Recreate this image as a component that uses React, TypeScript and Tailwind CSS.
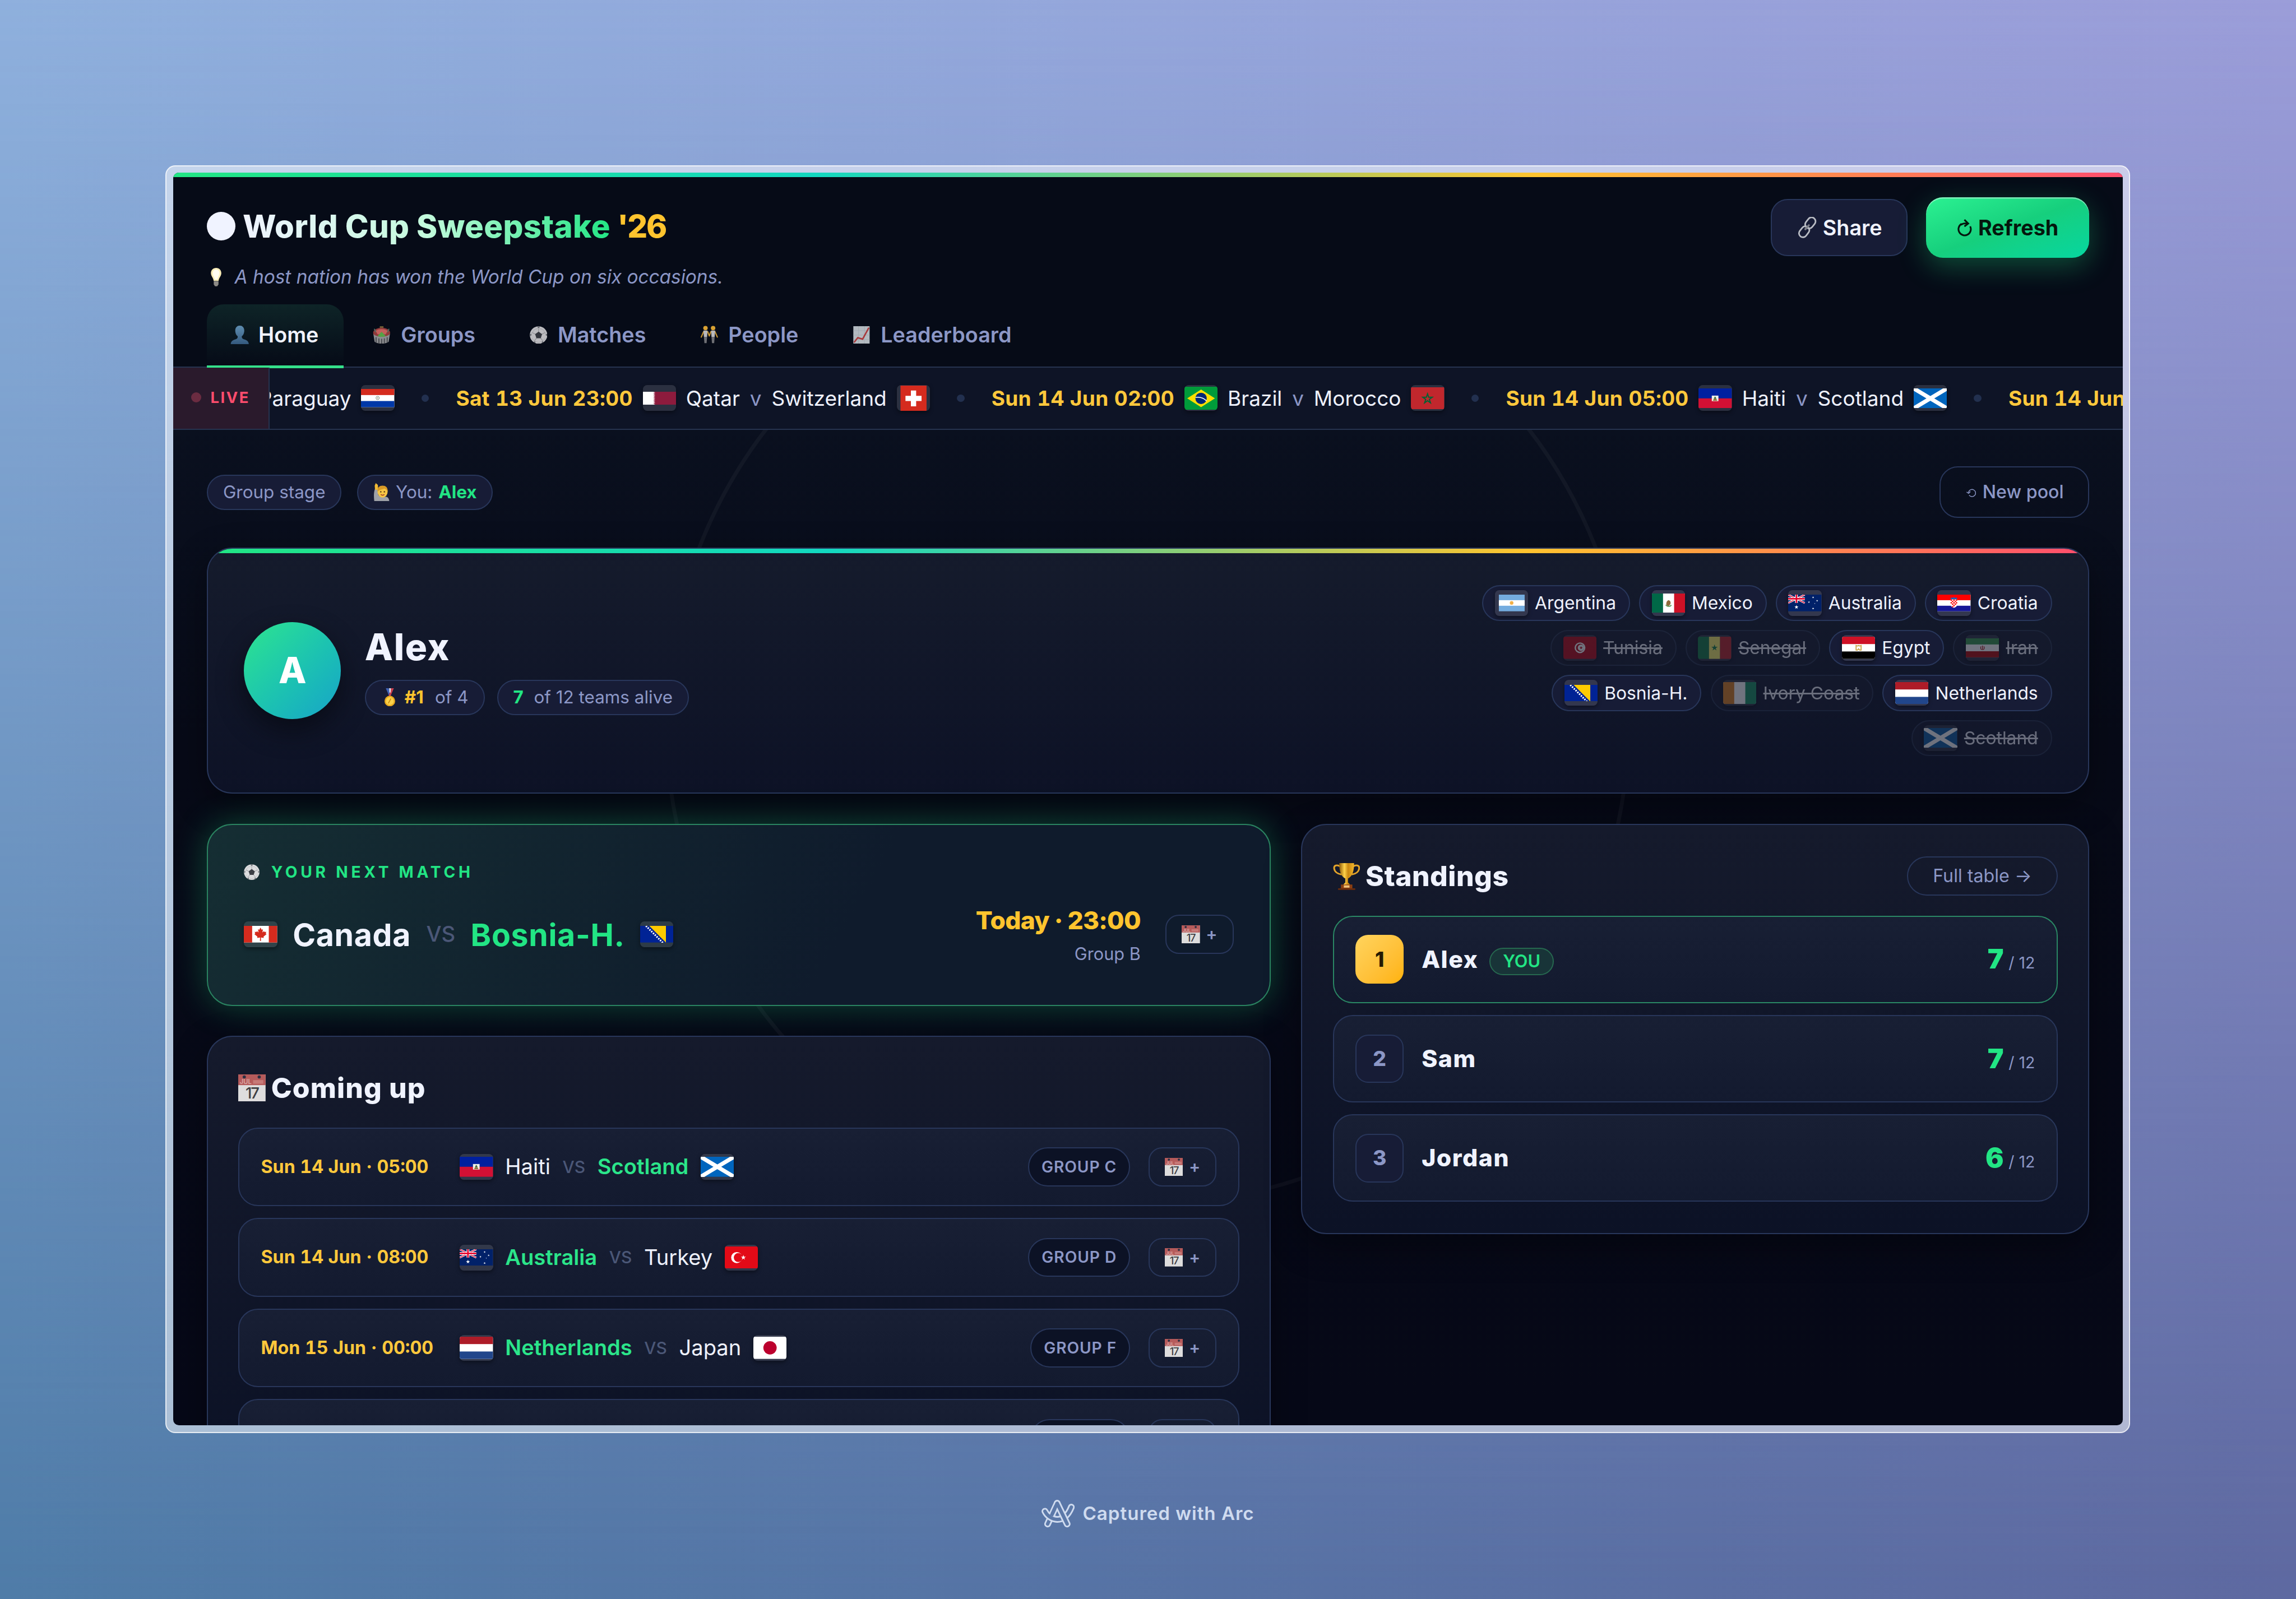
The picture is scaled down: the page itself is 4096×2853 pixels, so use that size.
import type { ReactNode } from 'react'
import clsx from 'clsx'

type Code =
  | 'par' | 'qat' | 'sui' | 'bra' | 'mar' | 'hai' | 'sco' | 'arg' | 'mex' | 'aus' | 'cro' | 'tun'
  | 'sen' | 'egy' | 'irn' | 'bih' | 'civ' | 'ned' | 'can' | 'tur' | 'jpn'

const STAR = 'M0-1 .225-.309.951-.309.363.118.588.809 0 .382-.588.809-.363.118-.951-.309-.225-.309Z'

function Star({ x, y, r, fill = '#fff' }: { x: number; y: number; r: number; fill?: string }) {
  return <path d={STAR} fill={fill} transform={`translate(${x} ${y}) scale(${r})`} />
}

// every flag is 24 units wide; h is what its own proportions make of that
const FLAGS: Record<Code, { h: number; art: ReactNode }> = {
  par: {
    h: 13.1,
    art: (
      <>
        <rect width="24" height="13.1" fill="#fff" />
        <rect width="24" height="4.4" fill="#d52b1e" />
        <rect y="8.7" width="24" height="4.4" fill="#0038a8" />
        <circle cx="12" cy="6.5" r="1.2" fill="none" stroke="#7b8a80" strokeWidth=".4" />
        <circle cx="12" cy="6.5" r=".4" fill="#8a8a60" />
      </>
    ),
  },
  qat: {
    h: 9.4,
    art: (
      <>
        <rect width="24" height="9.4" fill="#8d1b3d" />
        <path
          d="M0 0H7.4L8.9.52 7.4 1.04 8.9 1.57 7.4 2.09 8.9 2.61 7.4 3.13 8.9 3.66 7.4 4.18 8.9 4.7 7.4 5.22 8.9 5.74 7.4 6.27 8.9 6.79 7.4 7.31 8.9 7.83 7.4 8.36 8.9 8.88 7.4 9.4H0Z"
          fill="#fff"
        />
      </>
    ),
  },
  sui: {
    h: 18.5,
    art: (
      <>
        <rect x="2.6" width="18.8" height="18.5" fill="#d52b1e" />
        <path d="M10.1 3.5h3.8v3.9h3.9v3.7h-3.9V15h-3.8v-3.9H6.2V7.4h3.9Z" fill="#fff" />
      </>
    ),
  },
  bra: {
    h: 16.8,
    art: (
      <>
        <rect width="24" height="16.8" fill="#009b3a" />
        <path d="M12 2 22 8.4 12 14.8 2 8.4Z" fill="#fedf00" />
        <circle cx="12" cy="8.4" r="4.1" fill="#002776" />
        <path d="M8 7.7c3-.5 6 .4 8 2.6" fill="none" stroke="#fff" strokeWidth=".6" />
      </>
    ),
  },
  mar: {
    h: 16,
    art: (
      <>
        <rect width="24" height="16" fill="#c1272d" />
        <path
          d={STAR}
          fill="none"
          stroke="#006233"
          strokeWidth=".22"
          transform="translate(12 8.3) scale(3.6)"
        />
      </>
    ),
  },
  hai: {
    h: 14.4,
    art: (
      <>
        <rect width="24" height="7.2" fill="#00209f" />
        <rect y="7.2" width="24" height="7.2" fill="#d21034" />
        <rect x="9.6" y="5.2" width="4.8" height="4" fill="#f1efe6" />
        <path d="M12 5.8 13 7.4h-2Z" fill="#30683a" />
        <path d="M10.4 8.9h3.2L12.8 7.4h-1.6Z" fill="#8a7440" />
      </>
    ),
  },
  sco: {
    h: 14.4,
    art: (
      <>
        <rect width="24" height="14.4" fill="#0065bd" />
        <path d="M0 0 24 14.4M24 0 0 14.4" stroke="#fff" strokeWidth="2.9" />
      </>
    ),
  },
  arg: {
    h: 12,
    art: (
      <>
        <rect x="2.8" width="18.6" height="12" fill="#74acdf" />
        <rect x="2.8" y="4" width="18.6" height="4" fill="#fff" />
        <circle cx="12" cy="6" r="1.3" fill="#f0b04a" />
      </>
    ),
  },
  mex: {
    h: 14.1,
    art: (
      <>
        <rect width="24" height="14.1" fill="#fff" />
        <rect width="8" height="14.1" fill="#006847" />
        <rect x="16" width="8" height="14.1" fill="#ce1126" />
        <path d="M10.4 8.2c-.2-1.6.4-3 1.6-3.4.9.2 1.6 1 1.5 2.2-.2 1-1 1.6-1.7 2.4" fill="#8f6a3c" />
        <path d="M10 8.2c.6 1.4 3.2 1.5 4 .1" fill="none" stroke="#5f9a58" strokeWidth=".7" />
      </>
    ),
  },
  aus: {
    h: 12,
    art: (
      <>
        <rect width="24" height="12" fill="#012169" />
        <path d="M0 0 12 6M12 0 0 6" stroke="#fff" strokeWidth="1.3" />
        <path d="M0 0 12 6M12 0 0 6" stroke="#e4002b" strokeWidth=".5" />
        <path d="M6 0V6M0 3H12" stroke="#fff" strokeWidth="2" />
        <path d="M6 0V6M0 3H12" stroke="#e4002b" strokeWidth="1.1" />
        <Star x={6} y={9} r={1.5} />
        <Star x={18} y={2} r={0.75} />
        <Star x={18} y={10} r={0.8} />
        <Star x={15} y={5.4} r={0.8} />
        <Star x={20.9} y={4.4} r={0.75} />
        <Star x={19.2} y={6.4} r={0.4} />
      </>
    ),
  },
  cro: {
    h: 12,
    art: (
      <>
        <rect width="24" height="12" fill="#fff" />
        <rect width="24" height="4" fill="#ff0000" />
        <rect y="8" width="24" height="4" fill="#171796" />
        <path d="M9.6 3.4h4.8v3.4c0 1.6-1.1 2.4-2.4 2.7-1.3-.3-2.4-1.1-2.4-2.7Z" fill="#fff" />
        <path
          d="M9.6 3.4h1v1h-1ZM11.6 3.4h1v1h-1ZM13.5 3.4h.9v1h-.9ZM10.6 4.4h1v1h-1ZM12.6 4.4h1v1h-1ZM9.6 5.4h1v1h-1ZM11.6 5.4h1v1h-1ZM13.5 5.4h.9v1h-.9ZM10.6 6.4h1v1h-1ZM12.6 6.4h1v1h-1ZM11.6 7.4h1v1h-1ZM10.6 8.3h1v.8h-1Z"
          fill="#f00"
        />
        <path d="M9.6 3.3 9.9 1.9l1 .5 1.1-.7 1.1.7 1-.5.3 1.4Z" fill="#1a62b8" />
      </>
    ),
  },
  tun: {
    h: 16,
    art: (
      <>
        <rect width="24" height="16" fill="#e70013" />
        <circle cx="12" cy="8" r="3.9" fill="#fff" />
        <circle cx="12" cy="8" r="2.9" fill="#e70013" />
        <circle cx="12.7" cy="8" r="2.3" fill="#fff" />
        <Star x={12.8} y={8} r={1.3} fill="#e70013" />
      </>
    ),
  },
  sen: {
    h: 16,
    art: (
      <>
        <rect width="8" height="16" fill="#00853f" />
        <rect x="8" width="8" height="16" fill="#fdef42" />
        <rect x="16" width="8" height="16" fill="#e31b23" />
        <Star x={12} y={8} r={2.4} fill="#00853f" />
      </>
    ),
  },
  egy: {
    h: 16,
    art: (
      <>
        <rect width="24" height="16" fill="#fff" />
        <rect width="24" height="5.33" fill="#ce1126" />
        <rect y="10.67" width="24" height="5.33" fill="#000" />
        <path d="M10.2 6.4c1 .6 1.4.2 1.8 0 .4.2.8.6 1.8 0v3.3h-1l-.8-1-.8 1h-1Z" fill="none" stroke="#c8a03c" strokeWidth=".7" />
      </>
    ),
  },
  irn: {
    h: 13.7,
    art: (
      <>
        <rect width="24" height="13.7" fill="#fff" />
        <rect width="24" height="4.4" fill="#239f40" />
        <rect y="9.3" width="24" height="4.4" fill="#da0000" />
        <path d="M12 5.3v3M11 5.8c-.6 1-.3 2 .6 2.4M13 5.8c.6 1 .3 2-.6 2.4" fill="none" stroke="#da0000" strokeWidth=".5" />
      </>
    ),
  },
  bih: {
    h: 12,
    art: (
      <>
        <rect width="24" height="12" fill="#002395" />
        <path d="M6.6 0H18.6V12Z" fill="#fecb00" />
        <path d="M4.2 0 16.6 12.4" stroke="#fff" strokeWidth="1.3" strokeDasharray="1 .8" />
      </>
    ),
  },
  civ: {
    h: 16,
    art: (
      <>
        <rect width="24" height="16" fill="#fff" />
        <rect width="8" height="16" fill="#f77f00" />
        <rect x="16" width="8" height="16" fill="#009e60" />
      </>
    ),
  },
  ned: {
    h: 16,
    art: (
      <>
        <rect width="24" height="16" fill="#fff" />
        <rect width="24" height="5.33" fill="#ae1c28" />
        <rect y="10.67" width="24" height="5.33" fill="#21468b" />
      </>
    ),
  },
  can: {
    h: 12,
    art: (
      <>
        <rect width="24" height="12" fill="#fff" />
        <rect width="6" height="12" fill="#d52b1e" />
        <rect x="18" width="6" height="12" fill="#d52b1e" />
        <path
          d="m12 1.2.9 1.6.9-.4-.4 2.4 1.2-1.1.3.7 1.3-.2-.4 1.3.6.5-2.2 1.8.2.9-2.1-.3.1 2.4h-.8l.1-2.4-2.1.3.2-.9-2.2-1.8.6-.5-.4-1.3 1.3.2.3-.7 1.2 1.1-.4-2.4.9.4Z"
          fill="#d52b1e"
        />
      </>
    ),
  },
  tur: {
    h: 16,
    art: (
      <>
        <rect width="24" height="16" fill="#e30a17" />
        <circle cx="8.6" cy="8" r="4" fill="#fff" />
        <circle cx="9.7" cy="8" r="3.2" fill="#e30a17" />
        <Star x={13.4} y={8} r={1.9} />
      </>
    ),
  },
  jpn: {
    h: 16,
    art: (
      <>
        <rect width="24" height="16" fill="#fff" />
        <circle cx="12" cy="8" r="4.8" fill="#bc002d" />
      </>
    ),
  },
}

function Flag({ code }: { code: Code }) {
  const { h, art } = FLAGS[code]
  return (
    <span className="flex h-[18.3px] w-[23.6px] shrink-0 items-center justify-center overflow-hidden rounded-[3px] bg-white/12 shadow-[0_1px_3px_rgba(0,0,0,0.4)]">
      <svg viewBox={`0 0 24 ${h}`} className="max-h-full w-full">{art}</svg>
    </span>
  )
}

function Ball({ className }: { className: string }) {
  return (
    <svg viewBox="0 0 24 24" className={className}>
      <circle cx="12" cy="12" r="11.8" fill="#dcdcde" />
      <path d="M12 7.5V3M16.500 10.800l4.300-2.300M14.800 16l3 4M9.200 16l-3 4M7.500 10.800 3.200 8.500" stroke="#a5a5aa" strokeWidth=".9" />
      <path d="M3.200 8.500 1.200 13M3.200 8.500 7 4.200 12 3l5 1.200 3.800 4.300 2 4.500M6.200 20 2.800 16M6.200 20l5.800 2 5.800-2 3.400-4" fill="none" stroke="#bcbcc0" strokeWidth=".7" />
      <path d="m12 7.300 4.700 3.500-1.800 5.400H9.100l-1.800-5.400Z" fill="#3c3e45" />
      <path d="M9.800.5h4.400L12 2.700ZM.4 10 .9 13.500l1.700-2ZM23.600 10l-.5 3.500-1.700-2ZM5 21.500l2.800 1.400-.6-2.600ZM19 21.500l-2.800 1.400.6-2.600Z" fill="#66686e" />
    </svg>
  )
}

function Calendar({ className }: { className: string }) {
  return (
    <svg viewBox="0 0 24 24" className={className}>
      <rect width="24" height="24" fill="#dedddd" />
      <rect width="24" height="9.400" fill="#b65b5b" />
      <rect x="13" y="5" width="9" height="3.200" fill="#c77a78" />
      <circle cx="5.300" cy="2.200" r="1.400" fill="#2b2f42" />
      <circle cx="18.400" cy="2.200" r="1.400" fill="#2b2f42" />
      <text x="1.400" y="8.600" fontSize="5.500" fill="#dba9a8" className="font-['Inter',sans-serif] font-semibold">JUL</text>
      <text x="12" y="21.300" fontSize="13.500" textAnchor="middle" letterSpacing="-1" fill="#3e3e42" className="font-['Inter',sans-serif] font-medium">17</text>
    </svg>
  )
}

function Bulb() {
  return (
    <svg viewBox="0 0 14 24" className="h-[13px] w-[7.600px]">
      <path d="M7 0c4 0 6.800 3 6.800 6.800C13.800 11 10.500 13 10.200 17H3.800C3.500 13 .2 11 .2 6.800.2 3 3 0 7 0Z" fill="#fbeeb8" />
      <path d="M7 2c2.600 0 4.400 2 4.400 4.800 0 3.200-2.200 5-2.600 8.200H5.200C4.800 11.800 2.600 10 2.600 6.800 2.600 4 4.400 2 7 2Z" fill="#fffdf0" />
      <path d="M3.900 17.500h6.200v4L8.500 24h-3l-1.600-2.500Z" fill="#8c8a86" />
    </svg>
  )
}

function Bust() {
  return (
    <svg viewBox="0 0 24 25" className="h-[13.300px] w-[13.300px]">
      <defs>
        <linearGradient id="bust" x1="0" y1="0" x2="0" y2="1">
          <stop offset="0" stopColor="#5e8db0" />
          <stop offset="1" stopColor="#34597d" />
        </linearGradient>
      </defs>
      <path d="M12 0c3.700 0 6 2.600 6 6.500 0 3.400-1.400 6.300-3.200 7.600-.3 2.400.6 3.500 3 4.200C21.600 19.400 24 21 24 25H0c0-4 2.400-5.600 6.200-6.700 2.400-.7 3.300-1.800 3-4.200C7.400 12.800 6 9.900 6 6.500 6 2.600 8.300 0 12 0Z" fill="url(#bust)" />
    </svg>
  )
}

function Stadium() {
  return (
    <svg viewBox="0 0 24 24" className="h-[12.600px] w-[12.600px]">
      <path d="M9.500 0h5v3h-5Z" fill="#6c5b34" />
      <ellipse cx="12" cy="9" rx="11.500" ry="7" fill="#8f3a3a" />
      <path d="M.8 10.500 2.500 21c5 3.600 14 3.600 19 0l1.700-10.500c-4 5-18.400 5-22.400 0Z" fill="#8b8c8f" />
      <path d="M4.500 15v7M8.300 16.500v7M12 17v7M15.700 16.500v7M19.500 15v7" stroke="#4b4d52" strokeWidth="1.500" />
      <path d="M4 6.500c3-3.400 13-3.400 16 0L17.500 11h-11Z" fill="#c4605c" />
      <path d="M12 7.500 17.500 13c-3 1.800-8 1.800-11 0Z" fill="#54a246" />
      <path d="M2 3.500 4 8M22 3.500 20 8" stroke="#4e7268" strokeWidth="1.300" />
    </svg>
  )
}

function Pair() {
  return (
    <svg viewBox="0 0 24 24" className="h-[13px] w-[13px]">
      <path d="M4.500 8 1.500 15M10 8l2 5.500M14 8l-2 5.500M19.500 8l3 7" stroke="#c8952f" strokeWidth="1.600" strokeLinecap="round" />
      <path d="M4.300 6.500h5.400l-.6 8.500H5ZM14.300 6.500h5.400L19 15h-4.100Z" fill="#b9b9bd" />
      <path d="M5 15h4.100L8.500 23H5.600ZM14.900 15H19l-.6 8h-2.900Z" fill="#6e6f74" />
      <circle cx="7" cy="3.200" r="2.900" fill="#d9a233" />
      <circle cx="17" cy="3.200" r="2.900" fill="#d9a233" />
    </svg>
  )
}

function Chart() {
  return (
    <svg viewBox="0 0 24 24" className="h-[12.600px] w-[12.600px]">
      <rect x="1" width="22" height="24" fill="#b3bac0" />
      <path d="M1 6h22M1 12h22M1 18h22M8 0v24M16 0v24" stroke="#a2aab1" strokeWidth=".7" />
      <path d="m2 22 5-6.500 6.500 2L22 2" fill="none" stroke="#a9383a" strokeWidth="2" />
    </svg>
  )
}

function Link() {
  return (
    <svg viewBox="0 0 24 24" className="h-[15px] w-[15px]" fill="none" stroke="#b9bcc4">
      <rect x="11" y="0" width="9" height="13.500" rx="4.500" strokeWidth="1.800" transform="rotate(38 15.500 7)" />
      <rect x="4" y="10" width="9" height="13.500" rx="4.500" strokeWidth="1.800" transform="rotate(38 8.500 17)" />
      <path d="m10 14 4-4.500" stroke="#7c7f88" strokeWidth="2.200" strokeLinecap="round" />
    </svg>
  )
}

function RaisedHand() {
  return (
    <svg viewBox="0 0 22 25" className="h-[12.800px] w-[11.600px]">
      <path d="M1 25C0 17 .5 12 2 8l4 1.500C5.500 14 6 17 9 18.500l9 .5c2.500.8 3.500 3 3.800 6Z" fill="#9fa2a8" />
      <path d="M2 9 1.600 3.500 3 0l3 2.600.3 7Z" fill="#f2ba35" />
      <ellipse cx="12.500" cy="12" rx="7" ry="8" fill="#f6c544" />
      <path d="M5.500 12C5 6 8 3.500 12.500 3.500S20 6 19.500 12c-1-3-3-4-4.500-4.500-3 1.500-7 1-9.500 4.500Z" fill="#d99a26" />
      <circle cx="10" cy="12" r="1" fill="#5a3c18" />
      <circle cx="15" cy="12" r="1" fill="#5a3c18" />
      <path d="M10 15.500c1.500 1.500 3.500 1.500 5 0" fill="none" stroke="#a4402c" strokeWidth="1.200" />
    </svg>
  )
}

function Medal() {
  return (
    <svg viewBox="0 0 16 25" className="h-[13px] w-[8.300px]">
      <path d="M2.500 0h4l3 10.500H7Z" fill="#3f62b5" />
      <path d="M13.500 0h-4l-3 10.500H9Z" fill="#c8414f" />
      <path d="M7 0h2.500L9 6 7.500 6Z" fill="#e8e8f0" />
      <circle cx="8" cy="17.500" r="7.300" fill="#e9a91e" />
      <circle cx="8" cy="17.500" r="5.400" fill="#fbd24a" />
      <path d="M6 20.500 9.500 14" stroke="#c98a12" strokeWidth="1.300" />
    </svg>
  )
}

function Trophy() {
  return (
    <svg viewBox="0 0 24 24" className="h-[19.400px] w-[19.400px]">
      <defs>
        <linearGradient id="cup" x1="0" x2="1">
          <stop offset="0" stopColor="#8f5a08" />
          <stop offset=".35" stopColor="#ffd24a" />
          <stop offset=".6" stopColor="#c98711" />
          <stop offset="1" stopColor="#f3b62a" />
        </linearGradient>
      </defs>
      <path d="M6.500 3.500C3.500 1.500.8 2.500 1 5c.3 3 3 5 6.500 5.500M17.500 3.500C20.500 1.500 23.200 2.500 23 5c-.3 3-3 5-6.500 5.500" fill="none" stroke="#e3a32a" strokeWidth="1.500" />
      <path d="M5.500.5h13C18.500 8 17 12 13.200 14v3.500L15.500 20h-7l2.300-2.500V14C7 12 5.500 8 5.500.5Z" fill="url(#cup)" />
      <path d="M7 19.300h10v3.500H7Z" fill="#8c3f12" />
      <path d="M9.500 20h5v2h-5Z" fill="#f2c27a" />
      <path d="M4.500 22.600h15V24h-15Z" fill="#6b2c0c" />
    </svg>
  )
}

function ArcLogo() {
  return (
    <svg viewBox="0 0 222 186" className="h-[19.700px] w-[23.500px]" fill="none" strokeLinecap="round">
      {/* each limb is a light outline with a background-coloured core */}
      <path d="M105 23 41 162" stroke="#cfdbef" strokeWidth="45" />
      <path d="M105 23 41 162" stroke="#5c79a9" strokeWidth="23" />
      <path d="M23 77c30 62 130 92 177-28" stroke="#cfdbef" strokeWidth="45" />
      <path d="M23 77c30 62 130 92 177-28" stroke="#5c79a9" strokeWidth="23" />
      <path d="M105 23 172 162" stroke="#cfdbef" strokeWidth="45" />
      <path d="M105 23 66 108" stroke="#5c79a9" strokeWidth="23" strokeLinecap="butt" />
      <path d="M105 23 172 162" stroke="#5c79a9" strokeWidth="23" />
    </svg>
  )
}

const DISPLAY = "font-['Inter',sans-serif] font-extrabold text-[#f0f3ff]"

const TABS: { label: string; icon: ReactNode }[] = [
  { label: 'Home', icon: <Bust /> },
  { label: 'Groups', icon: <Stadium /> },
  { label: 'Matches', icon: <Ball className="h-[12.600px] w-[12.600px] opacity-85" /> },
  { label: 'People', icon: <Pair /> },
  { label: 'Leaderboard', icon: <Chart /> },
]

function Header() {
  return (
    <header className="border-b border-[#26334f] bg-[#060b17] px-6 pt-[14.400px]">
      <div className="flex h-[43px] items-center justify-between">
        <div className="flex items-center pb-[2px]">
          <span className="size-[20.400px] rounded-full bg-[#f0f3ff]" />
          <h1 className="ml-[5px] whitespace-nowrap text-[22.400px] font-extrabold leading-none">
            <span className="bg-[linear-gradient(90deg,#f0f3ff,#c2fbdc_50%,#22e584)] bg-clip-text pb-1 tracking-[0.150px] text-transparent">
              World Cup Sweepstake
            </span>{' '}
            <span className="tracking-[-0.800px] text-[#ffc42e]">'26</span>
          </h1>
        </div>
        <div className="flex items-center gap-[13px]">
          <button className="flex h-[40.500px] w-[97px] items-center justify-center gap-[3.500px] rounded-xl border border-[#28365a] bg-[#171c36] text-[15px] font-semibold text-[#f0f3ff]">
            <Link />
            Share
          </button>
          <button className="flex h-[43px] w-[115.600px] items-center justify-center gap-[4px] rounded-xl bg-gradient-to-br from-[#2bf292] via-[#16cf7d] to-[#06d6a0] text-[15px] font-bold text-[#04170d] shadow-[0_6px_20px_rgba(34,229,132,0.3),inset_0_1px_0_rgba(255,255,255,0.4)]">
            <svg viewBox="0 0 22 24" className="h-[12.300px] w-[11.200px]" fill="none" stroke="#04170d" strokeWidth="2.400">
              <path d="M6.500 6.500A8.600 8.600 0 1 0 18.500 10" />
              <path d="M10.500 .8 15.800 6l-5.300 4" />
              <path d="M15.500 6C11 5.500 8 6 5.500 8" />
            </svg>
            Refresh
          </button>
        </div>
      </div>
      <div className="mt-[3.500px] flex h-5 items-center pl-[2.600px] text-[13.280px] italic text-[#8c97c6]">
        <Bulb />
        <span className="ml-[9.500px]">A host nation has won the World Cup on six occasions.</span>
      </div>
      <nav className="-mb-px mt-[9.500px] flex gap-[4.200px]">
        {TABS.map((t, i) => (
          <div
            key={t.label}
            className={clsx(
              'flex h-[45px] items-center rounded-t-xl border-b-2 px-[17.600px] text-[15px] font-semibold',
              i === 0
                ? 'border-[#35e08a] bg-gradient-to-b from-[#0e2427] to-[#060b17] text-[#f0f3ff]'
                : 'border-transparent text-[#8c97c6]',
            )}
          >
            <span className="-ml-[1px] flex w-[20px] items-center">{t.icon}</span>
            {t.label}
          </div>
        ))}
      </nav>
    </header>
  )
}

function TickerItem({ when, home, away }: { when: string; home: [Code, string]; away: [Code, string] }) {
  return (
    <>
      <b className="font-bold tabular-nums tracking-[0.120px] text-[#ffc83c]">{when}</b>
      <Flag code={home[0]} />
      <span>{home[1]}</span>
      <span className="text-[#8c97c6]">v</span>
      <span>{away[1]}</span>
      <Flag code={away[0]} />
      <Dot />
    </>
  )
}

function Dot() {
  return <i className="mx-[12px] size-[5.400px] shrink-0 rounded-full bg-[#22304f]" />
}

function Ticker() {
  return (
    <div className="flex h-[44px] border-b border-[#26334f] bg-[#0e1426]">
      <div className="flex w-[68.700px] shrink-0 items-center border-r border-[#26334f] bg-[#2a1a2c] pb-px pl-[12.800px] text-[10.900px] font-bold tracking-[1px] text-[#ff4d6d]">
        <i className="mr-[6.600px] size-[7.200px] rounded-full bg-[#6b2c41]" />
        LIVE
      </div>
      <div className="flex flex-1 items-center overflow-hidden whitespace-nowrap text-[14.720px] text-[#eef1fc]">
        <div className="-ml-[7.800px] flex items-center gap-[7.100px]">
          <span>Paraguay</span>
          <Flag code="par" />
          <Dot />
          <TickerItem when="Sat 13 Jun 23:00" home={['qat', 'Qatar']} away={['sui', 'Switzerland']} />
          <TickerItem when="Sun 14 Jun 02:00" home={['bra', 'Brazil']} away={['mar', 'Morocco']} />
          <TickerItem when="Sun 14 Jun 05:00" home={['hai', 'Haiti']} away={['sco', 'Scotland']} />
          <b className="font-bold tabular-nums tracking-[0.120px] text-[#ffc83c]">Sun 14 Jun 08:00</b>
        </div>
      </div>
    </div>
  )
}

function Pill({ children }: { children: ReactNode }) {
  return (
    <span className="flex h-[25px] items-center whitespace-pre rounded-full border border-[#28365a] bg-[#171c36] px-[10.700px] text-[12.500px] text-[#8c97c6]">
      {children}
    </span>
  )
}

const TEAMS: { code: Code; name: string; out?: boolean }[] = [
  { code: 'arg', name: 'Argentina' },
  { code: 'mex', name: 'Mexico' },
  { code: 'aus', name: 'Australia' },
  { code: 'cro', name: 'Croatia' },
  { code: 'tun', name: 'Tunisia', out: true },
  { code: 'sen', name: 'Senegal', out: true },
  { code: 'egy', name: 'Egypt' },
  { code: 'irn', name: 'Iran', out: true },
  { code: 'bih', name: 'Bosnia-H.' },
  { code: 'civ', name: 'Ivory Coast', out: true },
  { code: 'ned', name: 'Netherlands' },
  { code: 'sco', name: 'Scotland', out: true },
]

function Hero() {
  return (
    <section className="mt-[21.200px] flex h-[174.500px] flex-col overflow-hidden rounded-[18px] border border-[#28365a] bg-gradient-to-b from-[#151b2c] to-[#0d1226] shadow-[0_8px_24px_rgba(0,0,0,0.35)]">
      <div className="h-[3.200px] shrink-0 bg-[linear-gradient(90deg,#22e584,#12d8c0_33%,#ffc42e_70%,#ff4d6d)]" />
      <div className="-mt-[3.600px] flex flex-1 items-center px-[25.600px]">
        <div className="flex size-[68.600px] items-center justify-center rounded-full bg-gradient-to-br from-[#2fe58c] to-[#1aa3c8] text-[25.600px] font-extrabold text-white shadow-[0_8px_20px_rgba(0,0,0,0.45)]">
          A
        </div>
        <div className="ml-[17px]">
          <h2 className={clsx(DISPLAY, 'text-[26px] leading-[30px] tracking-[0.650px]')}>Alex</h2>
          <div className="mt-2 flex gap-[8.800px]">
            <Pill>
              <span className="ml-[2.200px] mr-[6.300px]"><Medal /></span>
              <b className="text-[#ffc42e]">#1</b>
              <span className="ml-[8px]">of 4</span>
            </Pill>
            <Pill>
              <b className="text-[#22e584]">7</b>
              <span className="ml-[7.400px]">of 12 teams alive</span>
            </Pill>
          </div>
        </div>
        <ul className="ml-auto flex w-[420px] flex-wrap justify-end gap-[6.400px]">
          {TEAMS.map(t => (
            <li
              key={t.name}
              className={clsx(
                'flex h-[25.500px] items-center gap-[4.800px] rounded-full border border-[#28365a] bg-[#171c36] pl-[8.200px] pr-[9.100px] text-[12.640px] text-[#eef1fc]',
                t.out && 'line-through opacity-40 saturate-75',
              )}
            >
              <Flag code={t.code} />
              {t.name}
            </li>
          ))}
        </ul>
      </div>
    </section>
  )
}

function AddToCalendar() {
  return (
    <button className="flex h-[27.800px] w-[48.400px] items-center justify-center gap-[4.200px] rounded-[9.600px] border border-[#28365a] text-[12px] font-semibold text-[#8c97c6]">
      <Calendar className="size-[13px]" />
      +
    </button>
  )
}

function NextMatch() {
  return (
    <section className="h-[129.200px] rounded-[18px] border border-[#2a8360] bg-[linear-gradient(120deg,#152e33,#0f1b2c_60%)] px-[25.600px] pt-[25px] shadow-[0_0_24px_rgba(34,229,132,0.28)]">
      <div className="flex h-[17px] items-center text-[11.200px] font-bold tracking-[2.280px] text-[#22e584]">
        <Ball className="mr-[8px] size-[11.200px]" />
        YOUR NEXT MATCH
      </div>
      <div className="mt-[12.600px] flex h-[46px] items-center">
        <div className="flex items-center gap-[10.900px] text-[22px] font-bold tracking-[0.280px] text-[#f0f3ff]">
          <Flag code="can" />
          Canada
          <span className="text-[15.200px] font-medium tracking-normal text-[#4b5777]">VS</span>
          <span className="text-[#22e584]">Bosnia-H.</span>
          <Flag code="bih" />
        </div>
        <div className="ml-auto mr-[17.500px] text-right">
          <div className="text-[17.600px] font-extrabold leading-[27.600px] tracking-[-0.300px] text-[#ffc42e]">Today · 23:00</div>
          <div className="text-[12.200px] leading-[19.600px] text-[#8c97c6]">Group B</div>
        </div>
        <AddToCalendar />
      </div>
    </section>
  )
}

type Fixture = { when: string; home: [Code, string]; away: [Code, string]; mine: 'home' | 'away'; group: string }

const FIXTURES: Fixture[] = [
  { when: 'Sun 14 Jun · 05:00', home: ['hai', 'Haiti'], away: ['sco', 'Scotland'], mine: 'away', group: 'C' },
  { when: 'Sun 14 Jun · 08:00', home: ['aus', 'Australia'], away: ['tur', 'Turkey'], mine: 'home', group: 'D' },
  { when: 'Mon 15 Jun · 00:00', home: ['ned', 'Netherlands'], away: ['jpn', 'Japan'], mine: 'home', group: 'F' },
  { when: '', home: ['civ', ''], away: ['sen', ''], mine: 'home', group: 'E' },
]

const MINE = 'font-semibold text-[#2be58a]'

function ComingUp() {
  return (
    <section className="mt-[21.300px] h-[300px] overflow-hidden rounded-t-[18px] border border-b-0 border-[#28365a] bg-gradient-to-b from-[#151a2c] to-[#0c1226] px-[21.600px] shadow-[0_8px_24px_rgba(0,0,0,0.35)]">
      <h2 className={clsx(DISPLAY, 'mt-[22px] flex h-7 items-center gap-[3.800px] text-[19.800px] tracking-[0.450px]')}>
        <Calendar className="size-[19.400px] tracking-normal" />
        Coming up
      </h2>
      <ul className="mt-[14.200px] flex flex-col gap-[8.500px]">
        {FIXTURES.map(f => (
          <li
            key={f.group}
            className="flex h-[55.700px] items-center rounded-[14px] border border-[#28365a] bg-gradient-to-b from-[#181f34] to-[#131a2f] px-[15.200px]"
          >
            <span className="w-[141px] whitespace-nowrap text-[12.800px] font-bold tabular-nums text-[#ffc83c]">{f.when}</span>
            {f.when && (
              <div className="flex items-center gap-[8.600px] text-[15.150px] text-[#eef1fc]">
                <Flag code={f.home[0]} />
                <span className={clsx(f.mine === 'home' && MINE)}>{f.home[1]}</span>
                <span className="text-[11.900px] font-medium text-[#4b5777]">VS</span>
                <span className={clsx(f.mine === 'away' && MINE)}>{f.away[1]}</span>
                <Flag code={f.away[0]} />
              </div>
            )}
            <span className="ml-auto mr-[13px] flex h-[27.600px] items-center rounded-full border border-[#28365a] bg-[#0c1225] px-[8.700px] text-[11.200px] font-semibold tracking-[0.360px] text-[#8c97c6]">
              GROUP {f.group}
            </span>
            <AddToCalendar />
          </li>
        ))}
      </ul>
    </section>
  )
}

const STANDINGS = [
  { name: 'Alex', alive: 7, you: true },
  { name: 'Sam', alive: 7, you: false },
  { name: 'Jordan', alive: 6, you: false },
]

function Standings() {
  return (
    <section className="h-[291px] rounded-[18px] border border-[#28365a] bg-gradient-to-b from-[#151a2c] to-[#0c1226] px-[21.600px] pt-[22.300px] shadow-[0_8px_24px_rgba(0,0,0,0.35)]">
      <div className="flex h-[28px] items-center justify-between">
        <h2 className={clsx(DISPLAY, 'flex items-center gap-[3.800px] text-[19.800px] tracking-[0.200px]')}>
          <Trophy />
          Standings
        </h2>
        <button className="h-[27.800px] w-[106.700px] whitespace-nowrap rounded-full border border-[#28365a] text-[12.800px] text-[#8c97c6]">
          Full table →
        </button>
      </div>
      <ol className="mt-[14px] flex flex-col gap-[8.500px]">
        {STANDINGS.map((p, i) => (
          <li
            key={p.name}
            className={clsx(
              'flex h-[62px] items-center rounded-[14px] border bg-gradient-to-b from-[#181f34] to-[#131a2f] px-[15.200px]',
              p.you ? 'border-[#2a8764]' : 'border-[#28365a]',
            )}
          >
            <span
              className={clsx(
                'flex size-[34.400px] items-center justify-center rounded-[9px] text-[14.800px] font-extrabold',
                p.you
                  ? 'bg-gradient-to-br from-[#ffd45c] to-[#ffb200] text-[#241a02]'
                  : 'border border-[#28365a] bg-[#171c36] text-[#8c97c6]',
              )}
            >
              {i + 1}
            </span>
            <span className={clsx(DISPLAY, 'ml-[12.600px] text-[17px] tracking-[0.600px]')}>{p.name}</span>
            {p.you && (
              <span className="ml-[7.800px] mt-[3px] flex h-[19.500px] items-center rounded-full border border-[#26684f] bg-[#183438] px-[8.800px] text-[12.200px] font-semibold text-[#22e584]">
                YOU
              </span>
            )}
            <span className="ml-auto flex items-baseline gap-[3.500px]">
              <b className="text-[19.200px] font-black text-[#22e584]">{p.alive}</b>
              <span className="text-[11.300px] text-[#8c97c6]">/ 12</span>
            </span>
          </li>
        ))}
      </ol>
    </section>
  )
}

export default function App() {
  return (
    <div className="relative h-[2853px] w-[4096px] overflow-hidden bg-[linear-gradient(90deg,#4f7ca8,#5e69a1)] font-['Inter',sans-serif]">
      <div className="absolute inset-0 bg-[linear-gradient(90deg,#8fb0dd,#9b9dd9)] [mask-image:linear-gradient(180deg,#000,transparent)]" />
      <div className="relative flex h-[1134.100px] w-[1628.200px] flex-col items-center pt-[117.400px] [zoom:2.515625]">
        <div className="h-[899.200px] w-[1393.300px] shrink-0 rounded-[7px] border border-white/70 bg-white/50 p-[4.440px]">
          <div className="relative flex h-[888.300px] flex-col overflow-hidden rounded-[4px] bg-[linear-gradient(180deg,#0a101f_20%,#070a17_45%,#060817)]">
            {/* centre circle of the pitch, behind everything */}
            <div className="absolute left-[348.500px] top-[47.500px] size-[685px] rounded-full border-[3px] border-white/[0.04]" />
            <div className="absolute bottom-0 left-[560px] h-[300px] w-[600px] bg-[radial-gradient(closest-side_at_45%_100%,rgba(255,196,46,0.05),transparent)]" />
            <div className="relative h-[3px] shrink-0 bg-[linear-gradient(90deg,#22e584,#12d8c0_33%,#ffc42e_70%,#ff4d6d)]" />
            <div className="relative">
              <Header />
              <Ticker />
              <main className="px-6 pt-[26px]">
                <div className="flex h-[36.500px] items-center">
                  <Pill>Group stage</Pill>
                  <div className="w-[11px]" />
                  <Pill>
                    <span className="mr-[4.300px]"><RaisedHand /></span>
                    You: <b className="ml-[0.800px] text-[#22e584]">Alex</b>
                  </Pill>
                  <button className="ml-auto flex h-[36.400px] w-[106px] items-center justify-center gap-[4.600px] rounded-[13px] border border-[#28365a] pl-[0.800px] text-[12.800px] font-medium text-[#8c97c6]">
                    <svg viewBox="0 0 22 20" className="mt-px h-[6.400px] w-[7px]" fill="none" stroke="#8c97c6" strokeWidth="1.800">
                      <path d="M6 15.500A8 8 0 1 0 5 8v3" />
                      <path d="m.5 8.500 4.500 3 4-4" />
                    </svg>
                    New pool
                  </button>
                </div>
                <Hero />
                <div className="mt-[21.300px] grid grid-cols-[754.500px_1fr] items-start gap-[21.600px]">
                  <div>
                    <NextMatch />
                    <ComingUp />
                  </div>
                  <Standings />
                </div>
              </main>
            </div>
          </div>
        </div>
        <footer className="mt-[44px] flex h-[26px] items-center gap-[5.600px] text-[13.200px] font-semibold tracking-[0.370px] text-[#cfdbef]">
          <ArcLogo />
          Captured with Arc
        </footer>
      </div>
    </div>
  )
}
